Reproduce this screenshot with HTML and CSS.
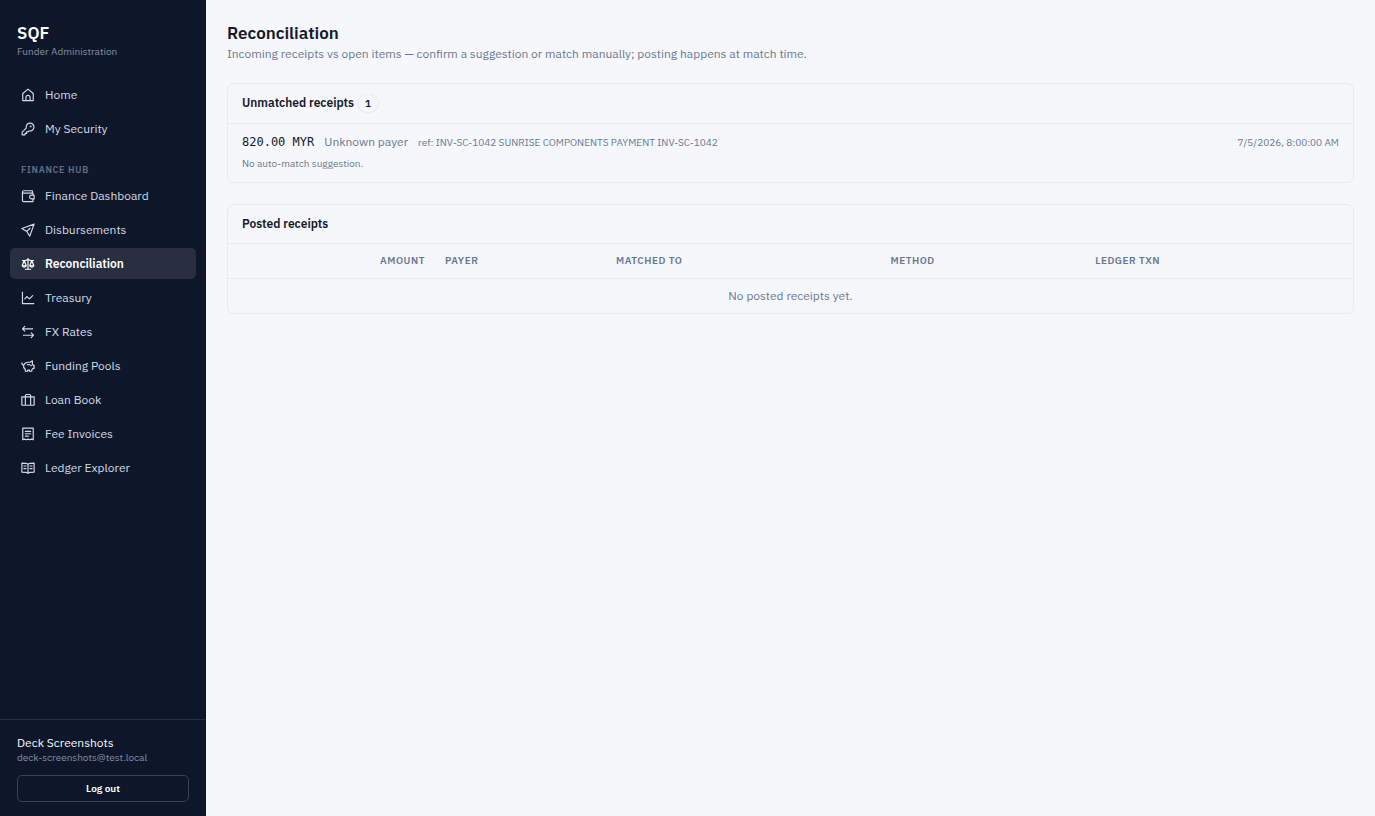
FILE: index.html
```html
<!DOCTYPE html>
<html lang="en">
<head>
<meta charset="utf-8">
<meta name="viewport" content="width=device-width, initial-scale=1">
<title>Reconciliation</title>
<link rel="stylesheet" href="styles.css">
</head>
<body>
<div class="app">
  <aside class="sidebar">
    <div class="brand">
      <div class="brand-name">SQF</div>
      <div class="brand-sub">Funder Administration</div>
    </div>
    <nav class="nav" aria-label="Main">
      <div class="nav-group">
        <a class="nav-link" href="#"><svg class="icon" viewBox="0 0 24 24"><path d="M3 9.500 12 2l9 7.500V21.500H3zM8.500 21.500V16a3.500 3.500 0 0 1 7 0v5.500"/></svg>Home</a>
        <a class="nav-link" href="#"><svg class="icon" viewBox="0 0 24 24"><path d="M9 10.500a6.700 6.700 0 1 1 4.800 4.700L12 17H9.500v2.500H7V22H2v-4.500z"/><circle cx="16.500" cy="7.500" r=".7"/></svg>My Security</a>
      </div>
      <div class="nav-group">
        <h2 class="nav-heading">Finance Hub</h2>
        <a class="nav-link" href="#"><svg class="icon" viewBox="0 0 24 24"><path d="M19.500 6.500V3H4.500A2 2 0 0 0 2.500 5v14.500a2 2 0 0 0 2 2h16V17M2.500 5a2 2 0 0 0 2 2h16v3.500M22.500 10.500H18a3.250 3.250 0 0 0 0 6.500h4.500z"/></svg>Finance Dashboard</a>
        <a class="nav-link" href="#"><svg class="icon" viewBox="0 0 24 24"><path d="M22.500 2 1.500 9.500l8.500 5 5 8zM10 14.500l5.500-5.500"/></svg>Disbursements</a>
        <a class="nav-link active" href="#" aria-current="page"><svg class="icon" viewBox="0 0 24 24"><path d="M12 2.500v18.500M7.500 21h9M2.500 6h4.500l5-1.500L17 6h4.500M5.500 6 2 15h7zM18.500 6 15 15h7zM2 15c.5 3 6.500 3 7 0M15 15c.5 3 6.500 3 7 0"/></svg>Reconciliation</a>
        <a class="nav-link" href="#"><svg class="icon" viewBox="0 0 24 24"><path d="M2.500 2v19.500H22M6.500 13.500l3.500-4 4.500 4 5.500-5.500"/></svg>Treasury</a>
        <a class="nav-link" href="#"><svg class="icon" viewBox="0 0 24 24"><path d="M6.500 2.500 2.500 6.500l4 4M2.500 6.500H20M17.500 13.500l4 4-4 4M21.500 17.500H4"/></svg>FX Rates</a>
        <a class="nav-link" href="#"><svg class="icon" viewBox="0 0 24 24"><path d="M1.500 6.500c0 3 1 4 3.200 4C6 7.500 8.500 5.500 12 5.500h3.500l4-2.500v5l1.500 3h1.500v5H20.500l-2 2.500V21h-4v-2h-3v2H7.500V18c-2.500-1.500-3.500-4.500-2.800-7.500M11 9.500h3.500"/><circle cx="17" cy="11" r=".6"/></svg>Funding Pools</a>
        <a class="nav-link" href="#"><svg class="icon" viewBox="0 0 24 24"><path d="M1.500 6.500h21V21h-21zM7.500 21V4.500a2 2 0 0 1 2-2h5a2 2 0 0 1 2 2V21"/></svg>Loan Book</a>
        <a class="nav-link" href="#"><svg class="icon" viewBox="0 0 24 24"><path d="M3 2h18v20l-3-1.200-3 1.200-3-1.200L9 22l-3-1.200L3 22zM7.500 7.500h9M7.500 11.500h9M7.500 15.500h5"/></svg>Fee Invoices</a>
        <a class="nav-link" href="#"><svg class="icon" viewBox="0 0 24 24"><path d="M12 5.500C10 3.500 6 3.500 1.500 3.500v15.500c5 0 8.500 0 10.500 2 2-2 5.500-2 10.500-2V3.500c-4.500 0-8.500 0-10.500 2zM12 5.500V21M5 8.500h3.500M5 13h3.500M15.500 8.500H19M15.500 13H19"/></svg>Ledger Explorer</a>
      </div>
    </nav>
    <div class="account">
      <div class="account-name">Deck Screenshots</div>
      <div class="account-mail">deck-screenshots@test.local</div>
      <button class="logout" type="button">Log out</button>
    </div>
  </aside>
  <main class="main">
    <header class="page-head">
      <h1 class="page-title">Reconciliation</h1>
      <p class="page-sub">Incoming receipts vs open items — confirm a suggestion or match manually; posting happens at match time.</p>
    </header>
    <section class="card">
      <h2 class="card-head">Unmatched receipts <span class="count">1</span></h2>
      <div class="receipt">
        <div class="receipt-row">
          <span class="amount">820.00 MYR</span>
          <span class="payer">Unknown payer</span>
          <span class="ref">ref: INV-SC-1042 SUNRISE COMPONENTS PAYMENT INV-SC-1042</span>
          <time class="date">7/5/2026, 8:00:00 AM</time>
        </div>
        <p class="hint">No auto-match suggestion.</p>
      </div>
    </section>
    <section class="card">
      <h2 class="card-head">Posted receipts</h2>
      <table class="table">
        <colgroup><col class="c-amount"><col class="c-payer"><col class="c-matched"><col class="c-method"><col class="c-ledger"></colgroup>
        <thead><tr><th class="num" scope="col">Amount</th><th scope="col">Payer</th><th scope="col">Matched to</th><th scope="col">Method</th><th scope="col">Ledger txn</th></tr></thead>
        <tbody><tr><td class="empty" colspan="5">No posted receipts yet.</td></tr></tbody>
      </table>
    </section>
  </main>
</div>
</body>
</html>
```
FILE: styles.css
```css
* { box-sizing: border-box; }
body {
  margin: 0;
  background: #f5f7fb;
  color: #14192b;
  font: 12px/18px "IBM Plex Sans", Roboto, "Liberation Sans", sans-serif;
}
h1, h2, p { margin: 0; }
.app { display: flex; min-height: 100vh; }
.sidebar {
  display: flex;
  flex: 0 0 206px;
  flex-direction: column;
  background: #0e172a;
  color: #d3dbe6;
}
.brand { padding: 21px 17px 17px; }
.brand-name { color: #fff; font-size: 17px; font-weight: 600; line-height: 24px; }
.brand-sub { color: #8490a5; font-size: 10px; line-height: 14px; }
.nav { display: flex; flex: 1; flex-direction: column; gap: 18px; padding: 3px 10px; }
.nav-group { display: flex; flex-direction: column; gap: 3px; }
.nav-heading {
  padding: 0 11px;
  color: #617088;
  font-size: 9px;
  font-weight: 600;
  line-height: 15px;
  letter-spacing: 0.08em;
  text-transform: uppercase;
}
.nav-link {
  display: flex;
  align-items: center;
  gap: 10px;
  height: 31px;
  padding: 0 11px;
  border-radius: 5px;
  color: inherit;
  text-decoration: none;
}
.nav-link.active { background: #272f40; color: #fff; font-weight: 600; }
.icon {
  width: 14px;
  height: 14px;
  fill: none;
  stroke: currentColor;
  stroke-width: 2;
  stroke-linecap: round;
  stroke-linejoin: round;
}
.account { padding: 14px 17px; border-top: 1px solid #263044; }
.account-name { color: #f8fafc; line-height: 17px; }
.account-mail { color: #8490a5; font-size: 10px; line-height: 14px; }
.logout {
  width: 100%;
  height: 27px;
  margin-top: 10px;
  border: 1px solid #384256;
  border-radius: 5px;
  background: transparent;
  color: #fff;
  font: inherit;
  font-size: 10px;
  font-weight: 600;
}
.main { display: flex; flex: 1; flex-direction: column; gap: 21px; min-width: 0; padding: 21px; }
.page-title { font-size: 17px; font-weight: 600; line-height: 24px; }
.page-sub { color: #697891; line-height: 17px; }
.card { border: 1px solid #e7eaef; border-radius: 7px; }
.card-head {
  padding: 10px 14px;
  border-bottom: 1px solid #e7eaef;
  font-size: 12px;
  font-weight: 600;
}
.count {
  display: inline-block;
  padding: 0 7px;
  border: 1px solid #e7eaef;
  border-radius: 10px;
  font-size: 10px;
  line-height: 17px;
}
.receipt { padding: 9px 14px; }
.receipt-row { display: flex; align-items: baseline; gap: 10px; color: #697891; }
.amount { color: #14192b; font-family: "DejaVu Sans Mono", monospace; }
.ref, .date, .hint { font-size: 10px; }
.date { margin-left: auto; }
.hint { margin-top: 3px; color: #697891; }
.table { width: 100%; border-collapse: collapse; table-layout: fixed; color: #697891; }
.c-amount { width: 207px; }
.c-payer { width: 15.2%; }
.c-matched { width: 24.4%; }
.c-method { width: 18.2%; }
th {
  padding: 8px 10px;
  border-bottom: 1px solid #e7eaef;
  font-size: 10px;
  font-weight: 600;
  letter-spacing: 0.05em;
  text-align: left;
  text-transform: uppercase;
}
th.num { text-align: right; }
.empty { padding: 8px 10px; text-align: center; }
```
